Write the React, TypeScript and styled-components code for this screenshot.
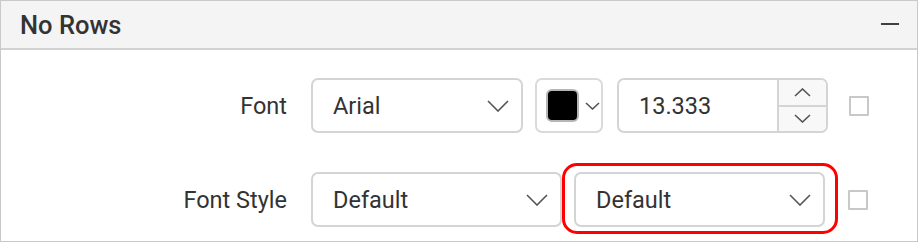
import React from 'react'
import styled, { createGlobalStyle } from 'styled-components'

const GlobalStyle = createGlobalStyle`
	html, body {
		margin: 0;
		padding: 0;
		background: #fff;
	}
	body {
		font-family: Roboto, "Liberation Sans", Arial, sans-serif;
		color: #333;
	}
`

const Chevron = ({ width, height, up }: { width: number, height: number, up?: boolean }) => (
	<svg width={width} height={height} viewBox={`0 0 ${width} ${height}`} fill="none">
		<polyline
			points={
				up
					? `1,${height - 1} ${width / 2},1 ${width - 1},${height - 1}`
					: `1,1 ${width / 2},${height - 1} ${width - 1},1`
			}
			stroke="#555"
			strokeWidth="1.6"
			strokeLinejoin="miter"
		/>
	</svg>
)

const Select = ({ value, width }: { value: string, width: number }) => (
	<Field $width={width}>
		<Value>{value}</Value>
		<Chevron width={22} height={12} />
	</Field>
)

export default function App() {
	return (
		<>
			<GlobalStyle />
			<Panel>
				<Header>
					<Title>No Rows</Title>
					<Collapse />
				</Header>
				<Body>
					<Row>
						<Label>Font</Label>
						<Select value="Arial" width={212} />
						<ColorPicker>
							<Swatch />
							<Chevron width={15} height={8} />
						</ColorPicker>
						<Numeric>
							<NumericValue>13.333</NumericValue>
							<Spin>
								<SpinButton>
									<Chevron width={17} height={9} up />
								</SpinButton>
								<SpinButton>
									<Chevron width={17} height={9} />
								</SpinButton>
							</Spin>
						</Numeric>
						<Checkbox $gap={21} />
					</Row>
					<Row>
						<Label>Font Style</Label>
						<Select value="Default" width={251} />
						<Highlight>
							<Select value="Default" width={251} />
						</Highlight>
						<Checkbox $gap={23} />
					</Row>
				</Body>
			</Panel>
		</>
	)
}

const Panel = styled.section`
	box-sizing: border-box;
	width: 918px;
	height: 242px;
	border: 1px solid #c9c9c9;
	overflow: hidden;
`

const Header = styled.header`
	display: flex;
	align-items: center;
	justify-content: space-between;
	height: 47px;
	padding: 0 18px 0 19px;
	background: #f4f4f4;
	border-bottom: 2px solid #d2d2d2;
`

const Title = styled.h2`
	margin: 0;
	font-size: 25.5px;
	font-weight: 500;
	color: #333;
`

const Collapse = styled.span`
	display: block;
	width: 18px;
	height: 2px;
	margin-bottom: 1px;
	background: #3f3f3f;
`

const Body = styled.div`
	display: flex;
	flex-direction: column;
	gap: 39px;
	padding-top: 28px;
`

const Row = styled.div`
	display: flex;
	align-items: center;
	height: 55px;
	gap: 12px;
`

const Label = styled.label`
	width: 286px;
	margin-right: 12px;
	text-align: right;
	font-size: 23.5px;
	color: #333;
`

const Field = styled.div<{ $width: number }>`
	box-sizing: border-box;
	display: flex;
	align-items: center;
	justify-content: space-between;
	width: ${p => p.$width}px;
	height: 55px;
	padding: 0 12px 0 20px;
	border: 2px solid #d4d4d4;
	border-radius: 7px;
	background: #fff;
`

const Value = styled.span`
	font-size: 23.5px;
	color: #333;
`

const ColorPicker = styled.div`
	box-sizing: border-box;
	display: flex;
	align-items: center;
	gap: 6px;
	width: 68px;
	height: 55px;
	padding-left: 9px;
	margin-right: 2px;
	border: 2px solid #dadada;
	border-radius: 7px;
`

const Swatch = styled.span`
	box-sizing: border-box;
	width: 33px;
	height: 33px;
	border: 2px solid #b5b5b5;
	border-radius: 6px;
	background: #000;
`

const Numeric = styled.div`
	box-sizing: border-box;
	display: flex;
	width: 211px;
	height: 55px;
	border: 2px solid #d4d4d4;
	border-radius: 7px;
	overflow: hidden;
`

const NumericValue = styled.span`
	flex: 1;
	display: flex;
	align-items: center;
	padding-left: 20px;
	font-size: 23.5px;
	color: #333;
`

const Spin = styled.div`
	display: flex;
	flex-direction: column;
	width: 47px;
	border-left: 2px solid #d4d4d4;
	background: #f8f8f8;
`

const SpinButton = styled.span`
	flex: 1;
	display: flex;
	align-items: center;
	justify-content: center;
	& + & {
		border-top: 2px solid #d4d4d4;
	}
`

const Highlight = styled.div`
	position: relative;
	&::after {
		content: '';
		position: absolute;
		top: -9px;
		bottom: -7px;
		left: -12px;
		right: -13px;
		border: 3px solid #f00;
		border-radius: 15px;
		pointer-events: none;
	}
`

const Checkbox = styled.span<{ $gap: number }>`
	box-sizing: border-box;
	width: 20px;
	height: 20px;
	margin-left: ${p => p.$gap - 12}px;
	border: 2px solid #c8c8c8;
	border-radius: 1px;
`
